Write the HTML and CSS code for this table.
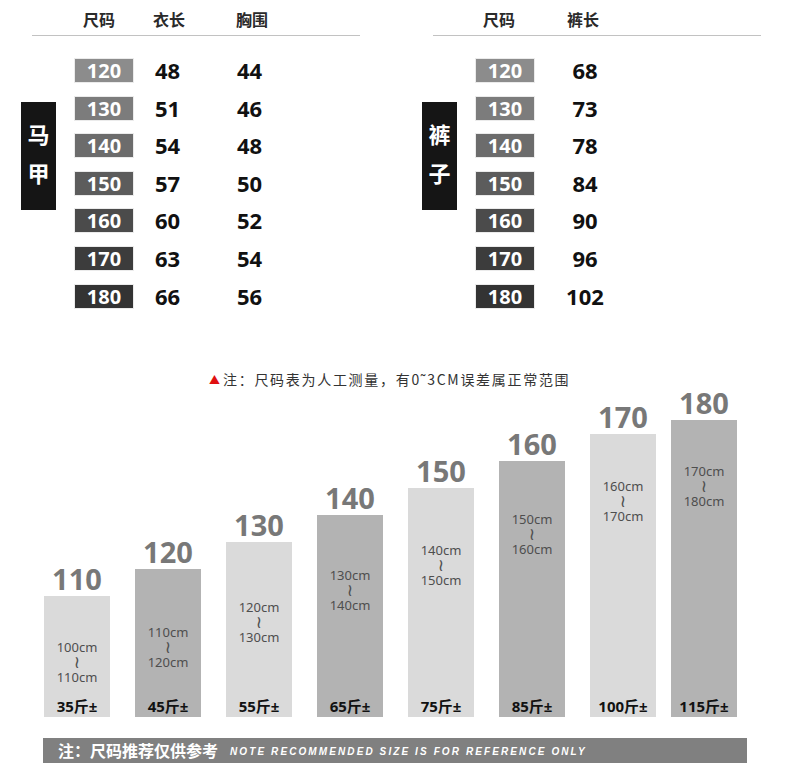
FILE: index.html
```html
<!DOCTYPE html>
<html lang="zh">
<head>
<meta charset="utf-8">
<title>尺码表</title>
<link rel="stylesheet" href="styles.css">
</head>
<body>
<main class="page">
  <section class="tables">
    <div class="panel">
      <div class="panel-head">
        <span class="hd hd-size">尺码</span>
        <span class="hd hd-a">衣长</span>
        <span class="hd">胸围</span>
      </div>
      <div class="panel-body">
        <div class="tag"><span>马</span><span>甲</span></div>
        <div class="rows">
          <div class="row"><span class="size s1">120</span><span class="val val-a">48</span><span class="val">44</span></div>
          <div class="row"><span class="size s2">130</span><span class="val val-a">51</span><span class="val">46</span></div>
          <div class="row"><span class="size s3">140</span><span class="val val-a">54</span><span class="val">48</span></div>
          <div class="row"><span class="size s4">150</span><span class="val val-a">57</span><span class="val">50</span></div>
          <div class="row"><span class="size s5">160</span><span class="val val-a">60</span><span class="val">52</span></div>
          <div class="row"><span class="size s6">170</span><span class="val val-a">63</span><span class="val">54</span></div>
          <div class="row"><span class="size s7">180</span><span class="val val-a">66</span><span class="val">56</span></div>
        </div>
      </div>
    </div>
    <div class="panel">
      <div class="panel-head">
        <span class="hd hd-size2">尺码</span>
        <span class="hd">裤长</span>
      </div>
      <div class="panel-body">
        <div class="tag"><span>裤</span><span>子</span></div>
        <div class="rows">
          <div class="row"><span class="size s1">120</span><span class="val val-c">68</span></div>
          <div class="row"><span class="size s2">130</span><span class="val val-c">73</span></div>
          <div class="row"><span class="size s3">140</span><span class="val val-c">78</span></div>
          <div class="row"><span class="size s4">150</span><span class="val val-c">84</span></div>
          <div class="row"><span class="size s5">160</span><span class="val val-c">90</span></div>
          <div class="row"><span class="size s6">170</span><span class="val val-c">96</span></div>
          <div class="row"><span class="size s7">180</span><span class="val val-c">102</span></div>
        </div>
      </div>
    </div>
  </section>

  <p class="note"><span class="tri">▲</span>注：尺码表为人工测量，有0˜3CM误差属正常范围</p>

  <section class="chart">
    <div class="col"><div class="num">110</div><div class="bar light" style="height:121px"><div class="range">100cm<span class="wave">≀</span>110cm</div><div class="wt">35斤±</div></div></div>
    <div class="col"><div class="num">120</div><div class="bar dark" style="height:148px"><div class="range">110cm<span class="wave">≀</span>120cm</div><div class="wt">45斤±</div></div></div>
    <div class="col"><div class="num">130</div><div class="bar light" style="height:175px"><div class="range">120cm<span class="wave">≀</span>130cm</div><div class="wt">55斤±</div></div></div>
    <div class="col"><div class="num">140</div><div class="bar dark" style="height:202px"><div class="range">130cm<span class="wave">≀</span>140cm</div><div class="wt">65斤±</div></div></div>
    <div class="col"><div class="num">150</div><div class="bar light" style="height:229px"><div class="range">140cm<span class="wave">≀</span>150cm</div><div class="wt">75斤±</div></div></div>
    <div class="col"><div class="num">160</div><div class="bar dark" style="height:256px"><div class="range">150cm<span class="wave">≀</span>160cm</div><div class="wt">85斤±</div></div></div>
    <div class="col"><div class="num">170</div><div class="bar light" style="height:283px"><div class="range">160cm<span class="wave">≀</span>170cm</div><div class="wt">100斤±</div></div></div>
    <div class="col col-last"><div class="num">180</div><div class="bar dark" style="height:297px"><div class="range">170cm<span class="wave">≀</span>180cm</div><div class="wt">115斤±</div></div></div>
  </section>

  <div class="banner"><span class="banner-cn">注：尺码推荐仅供参考</span><span class="banner-en">NOTE RECOMMENDED SIZE IS FOR REFERENCE ONLY</span></div>
</main>
</body>
</html>
```

FILE: styles.css
```css
* { box-sizing: border-box; }
html, body { margin: 0; padding: 0; background: #fff; }
body {
  font-family: "Noto Sans", "Noto Sans CJK SC", sans-serif;
  color: #111;
  width: 790px;
  height: 778px;
  overflow: hidden;
}
.page { width: 790px; }

/* ---------- tables ---------- */
.tables {
  display: flex;
  gap: 62px;
  padding-left: 21px;
}
.panel { width: 339px; }
.panel-head {
  margin-left: 11px;
  height: 36px;
  border-bottom: 1px solid #c2c2c2;
  display: flex;
  align-items: center;
  padding-top: 3px;
}
.hd {
  font-family: "Noto Sans CJK SC", sans-serif;
  font-size: 16px;
  font-weight: 700;
  color: #2a2a2a;
}
.hd-size { margin-left: 51px; width: 70px; }
.hd-a { width: 83px; }
.hd-size2 { margin-left: 50px; width: 84px; }

.panel-body {
  display: flex;
  align-items: flex-start;
  padding-top: 23px;
}
.tag {
  width: 35px;
  height: 108px;
  margin-top: 43px;
  padding-bottom: 7px;
  background: #151515;
  color: #fff;
  font-family: "Noto Sans CJK SC", sans-serif;
  font-weight: 700;
  font-size: 22px;
  line-height: 22px;
  display: flex;
  flex-direction: column;
  align-items: center;
  justify-content: center;
  gap: 17px;
}
.rows {
  margin-left: 19px;
  display: flex;
  flex-direction: column;
  gap: 14.6px;
}
.row {
  display: flex;
  align-items: center;
  height: 23px;
}
.size {
  width: 58px;
  height: 23px;
  line-height: 23px;
  text-align: center;
  color: #fff;
  font-weight: 700;
  font-size: 20px;
  box-shadow: 0 0 0 1px rgba(0,0,0,0.08);
}
.s1 { background: #8c8c8c; }
.s2 { background: #7c7c7c; }
.s3 { background: #6c6c6c; }
.s4 { background: #5c5c5c; }
.s5 { background: #4b4b4b; }
.s6 { background: #3c3c3c; }
.s7 { background: #333; }
.val {
  font-weight: 700;
  font-size: 22px;
  line-height: 23px;
  color: #111;
}
.val-a { margin-left: 22px; width: 82px; }
.val-c { margin-left: 22px; width: 58px; text-align: center; }

/* ---------- note ---------- */
.note {
  margin: 62px 0 0;
  padding-left: 209px;
  font-family: "Noto Sans CJK SC", sans-serif;
  font-size: 14px;
  line-height: 18px;
  letter-spacing: 1.7px;
  color: #333;
}
.tri {
  color: #e01010;
  font-size: 11px;
  letter-spacing: 3px;
  vertical-align: 1px;
}

/* ---------- chart ---------- */
.chart {
  display: flex;
  align-items: flex-end;
  gap: 25px;
  padding-left: 44px;
  margin-top: 0;
}
.col {
  width: 66px;
  display: flex;
  flex-direction: column;
}
.col-last { margin-left: -10px; }
.num {
  text-align: center;
  font-weight: 700;
  font-size: 29px;
  line-height: 30px;
  color: #787878;
  margin-bottom: 2px;
}
.bar {
  display: flex;
  flex-direction: column;
  justify-content: space-between;
  align-items: center;
  padding-bottom: 3px;
}
.light { background: #dadada; }
.dark { background: #b3b3b3; }
.range {
  display: flex;
  flex-direction: column;
  align-items: center;
  font-family: "Noto Sans", sans-serif;
  font-size: 13px;
  line-height: 15px;
  color: #4e4e4e;
}
.wave {
  display: block;
  height: 15px;
  font-family: "DejaVu Sans", sans-serif;
  font-size: 17px;
  line-height: 15px;
}
.col:nth-child(1) .range { padding-top: 44px; }
.col:nth-child(2) .range { padding-top: 56px; }
.col:nth-child(3) .range { padding-top: 58px; }
.col:nth-child(4) .range { padding-top: 53px; }
.col:nth-child(5) .range { padding-top: 55px; }
.col:nth-child(6) .range { padding-top: 51px; }
.col:nth-child(7) .range { padding-top: 45px; }
.col:nth-child(8) .range { padding-top: 44px; }
.wt {
  font-weight: 700;
  font-size: 15px;
  line-height: 16px;
  color: #111;
}

/* ---------- banner ---------- */
.banner {
  margin: 21px 0 0 43px;
  width: 704px;
  height: 25px;
  background: #808080;
  display: flex;
  align-items: center;
  padding-left: 15px;
  color: #fff;
}
.banner-cn {
  font-family: "Noto Sans CJK SC", sans-serif;
  font-weight: 700;
  font-size: 16px;
  line-height: 20px;
}
.banner-en {
  margin-left: 12px;
  font-family: "Liberation Sans", sans-serif;
  font-style: italic;
  font-weight: 700;
  font-size: 10px;
  letter-spacing: 2.1px;
  padding-top: 3px;
}
```
